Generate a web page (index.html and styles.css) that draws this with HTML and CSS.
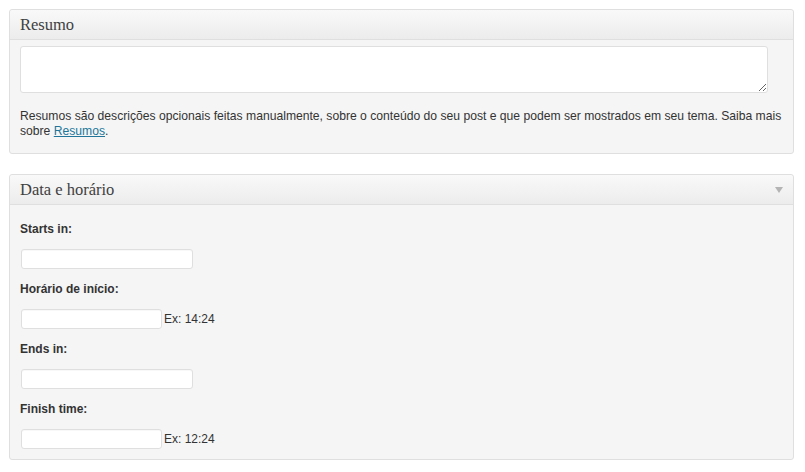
FILE: index.html
```html
<!DOCTYPE html>
<html lang="pt-BR">
<head>
<meta charset="utf-8">
<title>Resumo</title>
<link rel="stylesheet" href="styles.css">
</head>
<body>
<div class="page">
  <section class="postbox">
    <div class="hndle"><h3>Resumo</h3></div>
    <div class="inside inside-excerpt">
      <div class="ta-wrap">
        <textarea class="excerpt" rows="1" cols="40"></textarea>
      </div>
      <p class="desc">Resumos são descrições opcionais feitas manualmente, sobre o conteúdo do seu post e que podem ser mostrados em seu tema. Saiba mais sobre <a href="#">Resumos</a>.</p>
    </div>
  </section>

  <section class="postbox">
    <div class="hndle"><h3>Data e horário</h3><span class="toggle"></span></div>
    <div class="inside fields">
      <label class="flabel">Starts in:</label>
      <div class="frow"><input class="field wide" type="text"></div>
      <label class="flabel">Horário de início:</label>
      <div class="frow"><input class="field narrow" type="text"><span class="hint">Ex: 14:24</span></div>
      <label class="flabel">Ends in:</label>
      <div class="frow"><input class="field wide" type="text"></div>
      <label class="flabel">Finish time:</label>
      <div class="frow"><input class="field narrow" type="text"><span class="hint">Ex: 12:24</span></div>
    </div>
  </section>
</div>
</body>
</html>
```
FILE: styles.css
```css
* { box-sizing: border-box; }
html, body { margin: 0; padding: 0; background: #fff; }
body {
  font-family: "Liberation Sans", Arial, sans-serif;
  font-size: 13px;
  color: #333;
}
.page {
  padding: 9px 11px 0 9px;
}
.postbox {
  background: #f5f5f5;
  border: 1px solid #dfdfdf;
  border-radius: 3px;
  margin-bottom: 20px;
}
.hndle {
  height: 30px;
  border-bottom: 1px solid #dfdfdf;
  background: linear-gradient(to bottom, #f9f9f9, #ececec);
  border-radius: 3px 3px 0 0;
  display: flex;
  align-items: center;
  justify-content: space-between;
  padding: 0 10px;
}
.hndle h3 {
  margin: 0;
  font-family: "Liberation Serif", Georgia, serif;
  font-weight: normal;
  font-size: 16.5px;
  line-height: 18px;
  color: #404040;
}
.toggle {
  width: 0;
  height: 0;
  border-left: 4px solid transparent;
  border-right: 4px solid transparent;
  border-top: 6px solid #b4b4b4;
}
.inside-excerpt {
  padding: 6px 8px 14px 10px;
}
.ta-wrap { display: flex; }
.excerpt {
  width: 748px;
  height: 47px;
  margin: 0;
  border: 1px solid #dfdfdf;
  border-radius: 3px;
  background: #fff;
  font-family: "Liberation Sans", Arial, sans-serif;
  resize: both;
}
.desc {
  margin: 16px 0 0 0;
  font-size: 12.15px;
  line-height: 15px;
}
.desc a { color: #21759b; }
.fields {
  display: flex;
  flex-direction: column;
  gap: 12px;
  padding: 16px 10px 10px 10px;
}
.flabel {
  display: block;
  font-weight: bold;
  font-size: 12px;
  line-height: 16px;
  color: #333;
}
.frow {
  display: flex;
  align-items: center;
  height: 20px;
  padding-left: 1px;
}
.field {
  height: 20px;
  margin: 0;
  border: 1px solid #dfdfdf;
  border-radius: 3px;
  background: #fff;
  box-shadow: inset 0 1px 1px rgba(0,0,0,0.03);
}
.wide { width: 172px; }
.narrow { width: 141px; }
.hint {
  font-size: 12px;
  margin-left: 2px;
  color: #333;
}
```
